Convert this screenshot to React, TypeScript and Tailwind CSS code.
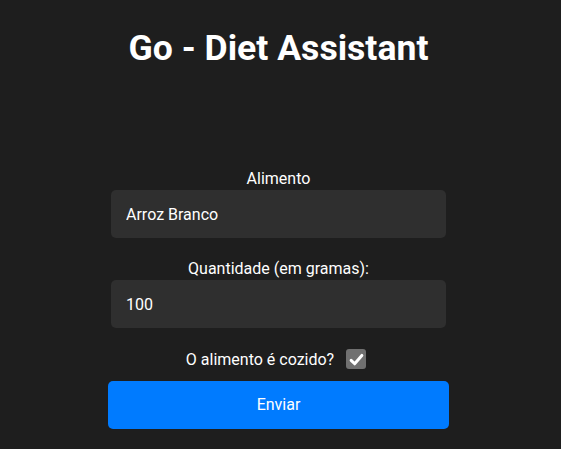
import React from "react";

export default function App() {
  return (
    <div
      className="min-h-[449px] w-full bg-[#1e1e1e] text-white"
      style={{ fontFamily: "Roboto, 'Liberation Sans', sans-serif" }}
    >
      <div className="flex w-[557px] flex-col items-center">
        <h1 className="pt-[28px] text-[35.6px] font-bold leading-[40px]">Go - Diet Assistant</h1>
        <form className="mt-[101px] flex w-[341px] flex-col" onSubmit={(e) => e.preventDefault()}>
          <label className="text-center text-[16px] leading-[19px]">Alimento</label>
          <input
            className="mx-[3px] mt-[2px] h-[48px] rounded-[5px] bg-[#2f2f2f] px-[15px] text-[16px] text-white outline-none"
            defaultValue="Arroz Branco"
          />
          <label className="mt-[21px] text-center text-[16px] leading-[19px]">Quantidade (em gramas):</label>
          <input
            className="mx-[3px] mt-[2px] h-[48px] rounded-[5px] bg-[#2f2f2f] px-[15px] text-[16px] text-white outline-none"
            defaultValue="100"
          />
          <div className="mt-[21px] flex h-[20px] items-center justify-center gap-[12px]">
            <span className="text-[16px] leading-[19px]">O alimento é cozido?</span>
            <span className="mr-[5px] flex h-[20px] w-[20px] items-center justify-center rounded-[3px] bg-[#707070]">
              <svg width="15" height="15" viewBox="0 0 14 14" fill="none">
                <path d="M2 7.8 L5.3 11 L12 3.2" stroke="white" strokeWidth="2.8" strokeLinecap="round" strokeLinejoin="round" />
              </svg>
            </span>
          </div>
          <button
            type="submit"
            className="mt-[12px] h-[48px] rounded-[5px] bg-[#007bff] text-[16px] text-white"
          >
            Enviar
          </button>
        </form>
      </div>
    </div>
  );
}
